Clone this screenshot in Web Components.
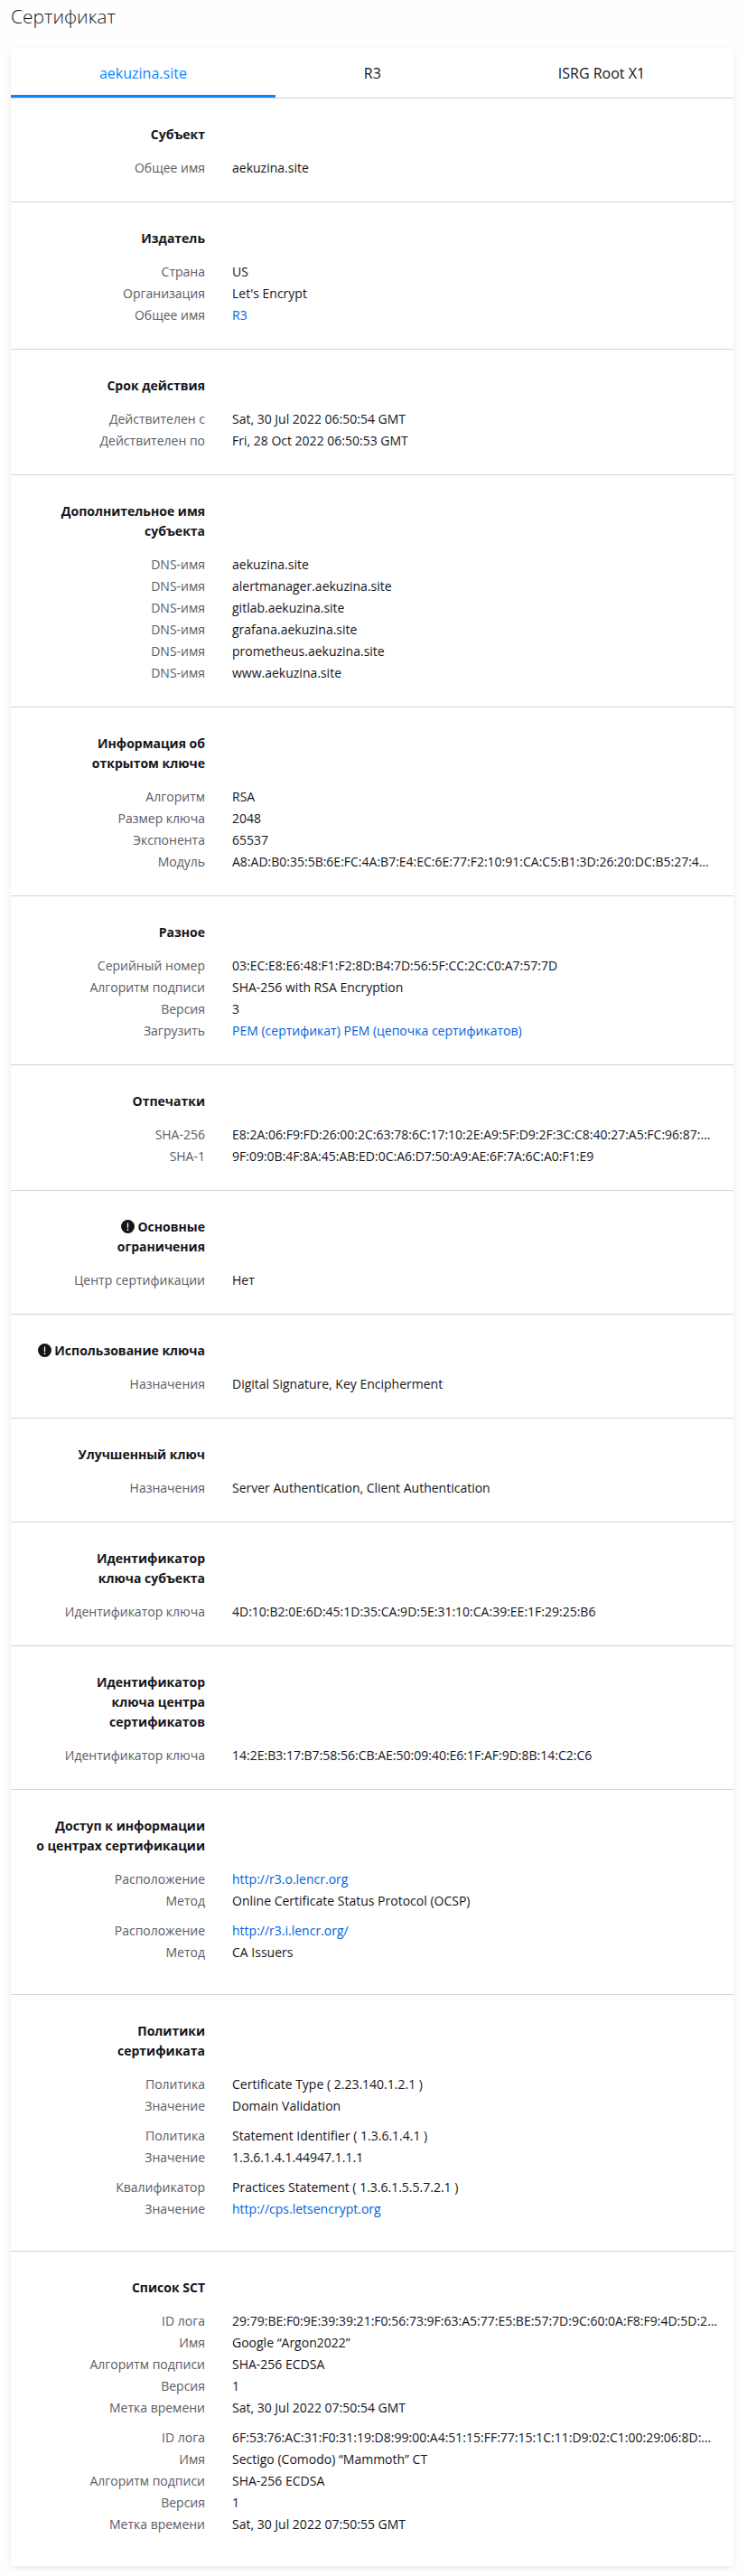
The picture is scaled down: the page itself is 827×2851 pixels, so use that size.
<!DOCTYPE html>
<html lang="ru">
<head>
<meta charset="utf-8">
<title>Сертификат</title>
<style>
  body {
    margin: 0;
    padding: 0 15px 10px 12px;
    background: #fefefe;
    color: #15141a;
    font: 14px/24px "Open Sans", "Noto Sans", sans-serif;
  }
</style>
</head>
<body>
<cert-page></cert-page>

<script>
const define = (name, html, setup) => {
  const template = document.createElement('template');
  template.innerHTML = html;
  customElements.define(name, class extends HTMLElement {
    constructor() {
      super();
      this.attachShadow({ mode: 'open' }).append(template.content.cloneNode(true));
    }
    connectedCallback() { if (setup) setup(this, this.shadowRoot); }
  });
};

define('cert-tab', `
  <style>
    :host { display: flex; flex: 1 1 auto; }
    button {
      flex: 1; height: 55px; margin: 0; padding: 3px 0 0; border: 0;
      border-bottom: 3px solid transparent; background: none;
      color: inherit; font: inherit; font-size: 16px; cursor: pointer;
    }
    :host([selected]) button { color: #0a84ff; border-bottom-color: #0a84ff; }
  </style>
  <button type="button" role="tab"><slot></slot></button>
`, (host, root) => {
  root.querySelector('button').setAttribute('aria-selected', host.hasAttribute('selected'));
});

define('cert-tabs', `
  <style>
    :host { display: flex; border-bottom: 1px solid #d4d4d8; }
  </style>
  <slot></slot>
`, host => host.setAttribute('role', 'tablist'));

define('cert-row', `
  <style>
    :host {
      display: grid; grid-template-columns: 180px 1fr; column-gap: 30px;
      line-height: 24px; white-space: nowrap;
    }
    .label { color: #5b5b66; text-align: right; }
    ::slotted(a) { color: #0061e0; text-decoration: none; }
  </style>
  <span class="label" id="label"></span>
  <span aria-labelledby="label"><slot></slot></span>
`, (host, root) => {
  root.querySelector('.label').textContent = host.getAttribute('label');
});

define('cert-group', `
  <style>
    :host { display: block; margin-bottom: 9px; }
  </style>
  <slot></slot>
`);

define('cert-section', `
  <style>
    :host { display: block; padding: 29px 32px 25px 35px; border-bottom: 1px solid #d4d4d8; }
    :host(:last-of-type) { border-bottom: 0; }
    h2 {
      display: flex; justify-content: flex-end; width: 180px; margin: 0 0 14px;
      font-size: 14px; line-height: 22px; font-weight: 700; text-align: right; white-space: nowrap;
    }
    svg { display: none; width: 15px; height: 15px; vertical-align: -2px; }
    :host([critical]) svg { display: inline-block; }
  </style>
  <h2><span>
    <svg viewBox="0 0 15 15" aria-hidden="true">
      <circle cx="7.5" cy="7.5" r="7.5" fill="#15141a"/>
      <path d="M7.5 4v4.5" stroke="#fff" stroke-width="1.3" stroke-linecap="round"/>
      <circle cx="7.5" cy="11" r="0.9" fill="#fff"/>
    </svg>
    <slot name="title"></slot>
  </span></h2>
  <slot></slot>
`);

define('cert-page', `
  <style>
    :host { display: block; }
    h1 { margin: 0; padding: 2px 0 19px; font-size: 21px; line-height: 32px; font-weight: 300; }
    main {
      display: block; max-width: 800px; background: #fff; border-radius: 4px;
      box-shadow: 0 2px 6px rgba(58, 57, 68, 0.1);
    }
    a { color: #0061e0; text-decoration: none; }
  </style>
  <h1>Сертификат</h1>
  <main>
    <cert-tabs>
      <cert-tab selected>aekuzina.site</cert-tab>
      <cert-tab>R3</cert-tab>
      <cert-tab>ISRG Root X1</cert-tab>
    </cert-tabs>
    <cert-section>
      <span slot="title">Субъект</span>
      <cert-row label="Общее имя">aekuzina.site</cert-row>
    </cert-section>
    <cert-section>
      <span slot="title">Издатель</span>
      <cert-row label="Страна">US</cert-row>
      <cert-row label="Организация">Let's Encrypt</cert-row>
      <cert-row label="Общее имя"><a href="#r3">R3</a></cert-row>
    </cert-section>
    <cert-section>
      <span slot="title">Срок действия</span>
      <cert-row label="Действителен с">Sat, 30 Jul 2022 06:50:54 GMT</cert-row>
      <cert-row label="Действителен по">Fri, 28 Oct 2022 06:50:53 GMT</cert-row>
    </cert-section>
    <cert-section>
      <span slot="title">Дополнительное имя<br>субъекта</span>
      <cert-row label="DNS-имя">aekuzina.site</cert-row>
      <cert-row label="DNS-имя">alertmanager.aekuzina.site</cert-row>
      <cert-row label="DNS-имя">gitlab.aekuzina.site</cert-row>
      <cert-row label="DNS-имя">grafana.aekuzina.site</cert-row>
      <cert-row label="DNS-имя">prometheus.aekuzina.site</cert-row>
      <cert-row label="DNS-имя">www.aekuzina.site</cert-row>
    </cert-section>
    <cert-section>
      <span slot="title">Информация об<br>открытом ключе</span>
      <cert-row label="Алгоритм">RSA</cert-row>
      <cert-row label="Размер ключа">2048</cert-row>
      <cert-row label="Экспонента">65537</cert-row>
      <cert-row label="Модуль">A8:AD:B0:35:5B:6E:FC:4A:B7:E4:EC:6E:77:F2:10:91:CA:C5:B1:3D:26:20:DC:B5:27:4…</cert-row>
    </cert-section>
    <cert-section>
      <span slot="title">Разное</span>
      <cert-row label="Серийный номер">03:EC:E8:E6:48:F1:F2:8D:B4:7D:56:5F:CC:2C:C0:A7:57:7D</cert-row>
      <cert-row label="Алгоритм подписи">SHA-256 with RSA Encryption</cert-row>
      <cert-row label="Версия">3</cert-row>
      <cert-row label="Загрузить"><a href="#pem">PEM (сертификат)</a> <a href="#chain">PEM (цепочка сертификатов)</a></cert-row>
    </cert-section>
    <cert-section>
      <span slot="title">Отпечатки</span>
      <cert-row label="SHA-256">E8:2A:06:F9:FD:26:00:2C:63:78:6C:17:10:2E:A9:5F:D9:2F:3C:C8:40:27:A5:FC:96:87:…</cert-row>
      <cert-row label="SHA-1">9F:09:0B:4F:8A:45:AB:ED:0C:A6:D7:50:A9:AE:6F:7A:6C:A0:F1:E9</cert-row>
    </cert-section>
    <cert-section critical>
      <span slot="title">Основные<br>ограничения</span>
      <cert-row label="Центр сертификации">Нет</cert-row>
    </cert-section>
    <cert-section critical>
      <span slot="title">Использование ключа</span>
      <cert-row label="Назначения">Digital Signature, Key Encipherment</cert-row>
    </cert-section>
    <cert-section>
      <span slot="title">Улучшенный ключ</span>
      <cert-row label="Назначения">Server Authentication, Client Authentication</cert-row>
    </cert-section>
    <cert-section>
      <span slot="title">Идентификатор<br>ключа субъекта</span>
      <cert-row label="Идентификатор ключа">4D:10:B2:0E:6D:45:1D:35:CA:9D:5E:31:10:CA:39:EE:1F:29:25:B6</cert-row>
    </cert-section>
    <cert-section>
      <span slot="title">Идентификатор<br>ключа центра<br>сертификатов</span>
      <cert-row label="Идентификатор ключа">14:2E:B3:17:B7:58:56:CB:AE:50:09:40:E6:1F:AF:9D:8B:14:C2:C6</cert-row>
    </cert-section>
    <cert-section>
      <span slot="title">Доступ к информации<br>о центрах сертификации</span>
      <cert-group>
        <cert-row label="Расположение"><a href="http://r3.o.lencr.org">http://r3.o.lencr.org</a></cert-row>
        <cert-row label="Метод">Online Certificate Status Protocol (OCSP)</cert-row>
      </cert-group>
      <cert-group>
        <cert-row label="Расположение"><a href="http://r3.i.lencr.org/">http://r3.i.lencr.org/</a></cert-row>
        <cert-row label="Метод">CA Issuers</cert-row>
      </cert-group>
    </cert-section>
    <cert-section>
      <span slot="title">Политики<br>сертификата</span>
      <cert-group>
        <cert-row label="Политика">Certificate Type ( 2.23.140.1.2.1 )</cert-row>
        <cert-row label="Значение">Domain Validation</cert-row>
      </cert-group>
      <cert-group>
        <cert-row label="Политика">Statement Identifier ( 1.3.6.1.4.1 )</cert-row>
        <cert-row label="Значение">1.3.6.1.4.1.44947.1.1.1</cert-row>
      </cert-group>
      <cert-group>
        <cert-row label="Квалификатор">Practices Statement ( 1.3.6.1.5.5.7.2.1 )</cert-row>
        <cert-row label="Значение"><a href="http://cps.letsencrypt.org">http://cps.letsencrypt.org</a></cert-row>
      </cert-group>
    </cert-section>
    <cert-section>
      <span slot="title">Список SCT</span>
      <cert-group>
        <cert-row label="ID лога">29:79:BE:F0:9E:39:39:21:F0:56:73:9F:63:A5:77:E5:BE:57:7D:9C:60:0A:F8:F9:4D:5D:2…</cert-row>
        <cert-row label="Имя">Google “Argon2022”</cert-row>
        <cert-row label="Алгоритм подписи">SHA-256 ECDSA</cert-row>
        <cert-row label="Версия">1</cert-row>
        <cert-row label="Метка времени">Sat, 30 Jul 2022 07:50:54 GMT</cert-row>
      </cert-group>
      <cert-group>
        <cert-row label="ID лога">6F:53:76:AC:31:F0:31:19:D8:99:00:A4:51:15:FF:77:15:1C:11:D9:02:C1:00:29:06:8D:…</cert-row>
        <cert-row label="Имя">Sectigo (Comodo) “Mammoth” CT</cert-row>
        <cert-row label="Алгоритм подписи">SHA-256 ECDSA</cert-row>
        <cert-row label="Версия">1</cert-row>
        <cert-row label="Метка времени">Sat, 30 Jul 2022 07:50:55 GMT</cert-row>
      </cert-group>
    </cert-section>
  </main>
`);
</script>
</body>
</html>
